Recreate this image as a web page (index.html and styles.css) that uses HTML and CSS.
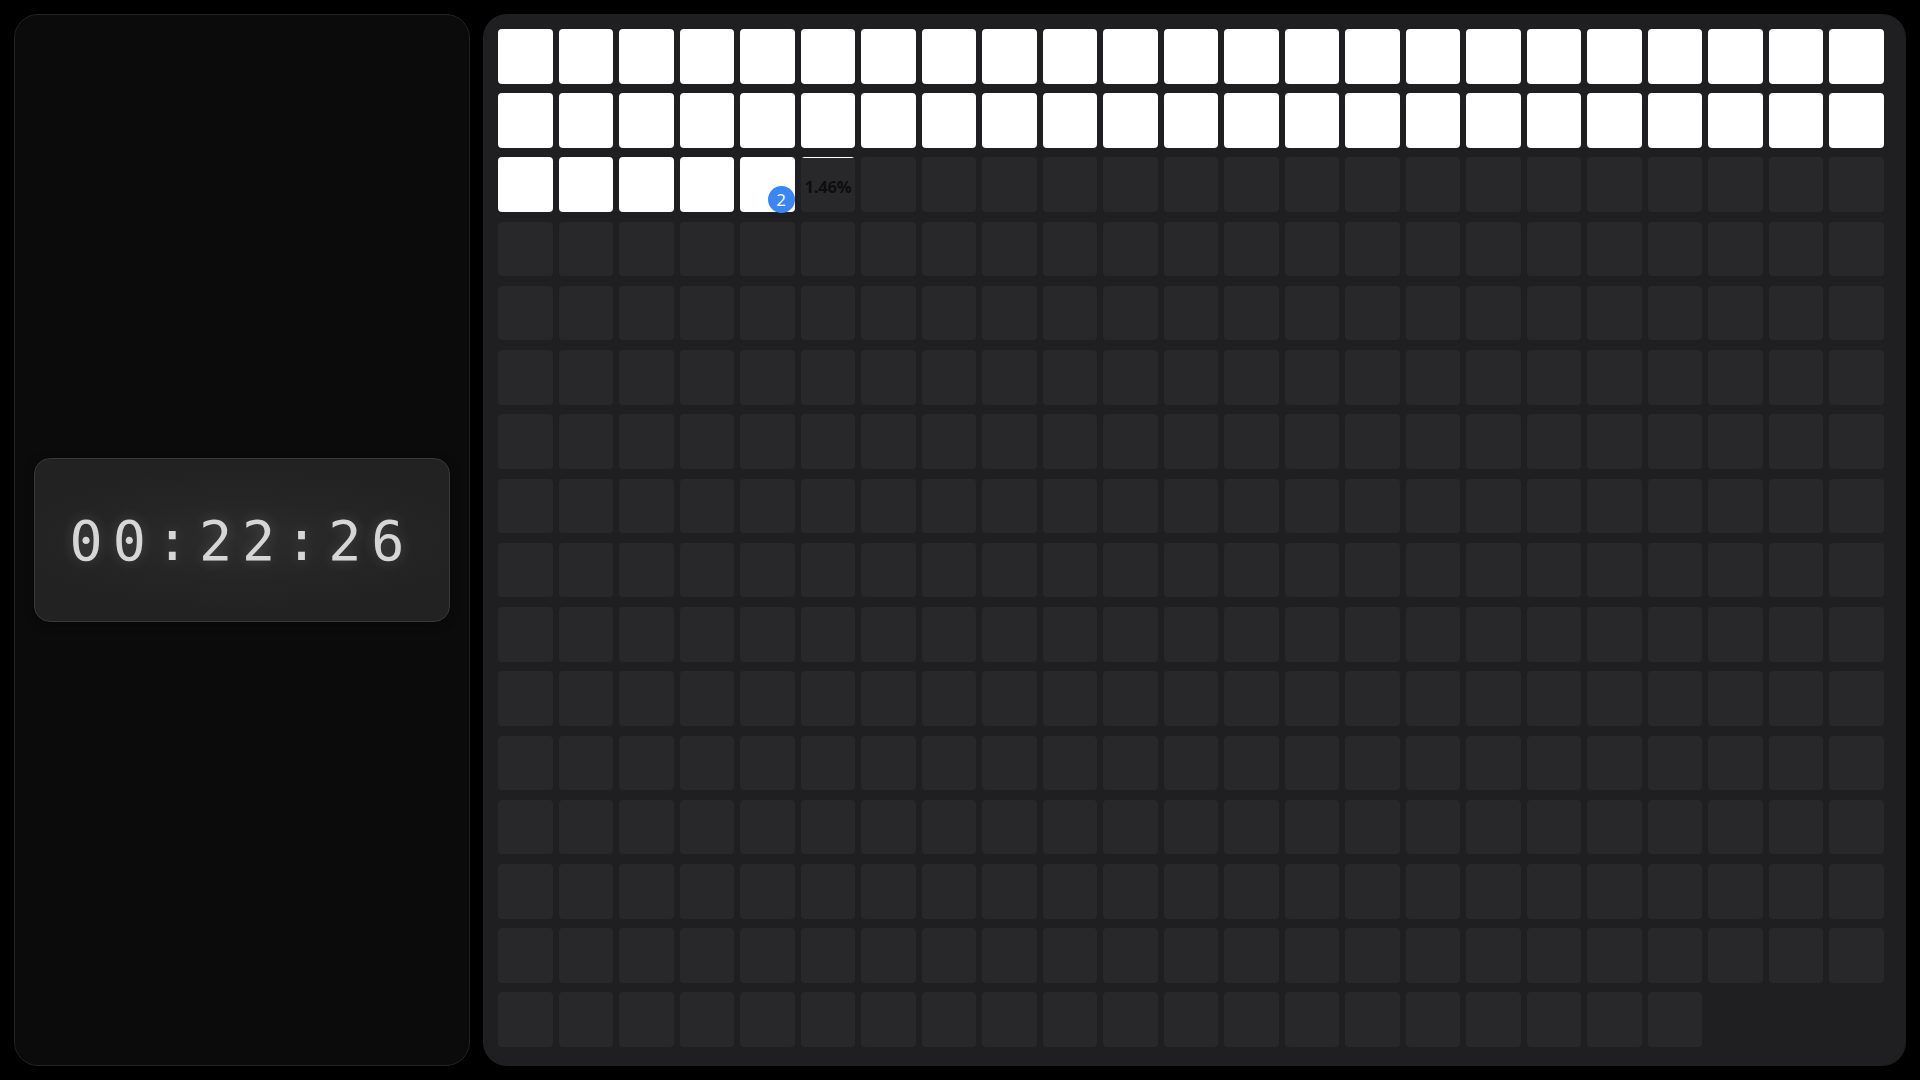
FILE: index.html
```html
<!DOCTYPE html>
<html lang="en">
<head>
<meta charset="utf-8">
<title>Year Progress</title>
<link rel="stylesheet" href="styles.css">
</head>
<body>
<main class="app">
  <aside class="side">
    <div class="clock"><span class="clock-text">00:22:26</span></div>
  </aside>
  <section class="board">
    <div class="grid">
      <div class="c f"></div><div class="c f"></div><div class="c f"></div><div class="c f"></div><div class="c f"></div><div class="c f"></div><div class="c f"></div><div class="c f"></div><div class="c f"></div><div class="c f"></div><div class="c f"></div><div class="c f"></div><div class="c f"></div><div class="c f"></div><div class="c f"></div><div class="c f"></div><div class="c f"></div><div class="c f"></div><div class="c f"></div><div class="c f"></div><div class="c f"></div><div class="c f"></div><div class="c f"></div>
      <div class="c f"></div><div class="c f"></div><div class="c f"></div><div class="c f"></div><div class="c f"></div><div class="c f"></div><div class="c f"></div><div class="c f"></div><div class="c f"></div><div class="c f"></div><div class="c f"></div><div class="c f"></div><div class="c f"></div><div class="c f"></div><div class="c f"></div><div class="c f"></div><div class="c f"></div><div class="c f"></div><div class="c f"></div><div class="c f"></div><div class="c f"></div><div class="c f"></div><div class="c f"></div>
      <div class="c f"></div><div class="c f"></div><div class="c f"></div><div class="c f"></div><div class="c f mark"><span class="badge">2</span></div><div class="c today"><span class="fill" style="height:1.46%"></span><span class="pct">1.46%</span></div><div class="c"></div><div class="c"></div><div class="c"></div><div class="c"></div><div class="c"></div><div class="c"></div><div class="c"></div><div class="c"></div><div class="c"></div><div class="c"></div><div class="c"></div><div class="c"></div><div class="c"></div><div class="c"></div><div class="c"></div><div class="c"></div><div class="c"></div>
      <div class="c"></div><div class="c"></div><div class="c"></div><div class="c"></div><div class="c"></div><div class="c"></div><div class="c"></div><div class="c"></div><div class="c"></div><div class="c"></div><div class="c"></div><div class="c"></div><div class="c"></div><div class="c"></div><div class="c"></div><div class="c"></div><div class="c"></div><div class="c"></div><div class="c"></div><div class="c"></div><div class="c"></div><div class="c"></div><div class="c"></div>
      <div class="c"></div><div class="c"></div><div class="c"></div><div class="c"></div><div class="c"></div><div class="c"></div><div class="c"></div><div class="c"></div><div class="c"></div><div class="c"></div><div class="c"></div><div class="c"></div><div class="c"></div><div class="c"></div><div class="c"></div><div class="c"></div><div class="c"></div><div class="c"></div><div class="c"></div><div class="c"></div><div class="c"></div><div class="c"></div><div class="c"></div>
      <div class="c"></div><div class="c"></div><div class="c"></div><div class="c"></div><div class="c"></div><div class="c"></div><div class="c"></div><div class="c"></div><div class="c"></div><div class="c"></div><div class="c"></div><div class="c"></div><div class="c"></div><div class="c"></div><div class="c"></div><div class="c"></div><div class="c"></div><div class="c"></div><div class="c"></div><div class="c"></div><div class="c"></div><div class="c"></div><div class="c"></div>
      <div class="c"></div><div class="c"></div><div class="c"></div><div class="c"></div><div class="c"></div><div class="c"></div><div class="c"></div><div class="c"></div><div class="c"></div><div class="c"></div><div class="c"></div><div class="c"></div><div class="c"></div><div class="c"></div><div class="c"></div><div class="c"></div><div class="c"></div><div class="c"></div><div class="c"></div><div class="c"></div><div class="c"></div><div class="c"></div><div class="c"></div>
      <div class="c"></div><div class="c"></div><div class="c"></div><div class="c"></div><div class="c"></div><div class="c"></div><div class="c"></div><div class="c"></div><div class="c"></div><div class="c"></div><div class="c"></div><div class="c"></div><div class="c"></div><div class="c"></div><div class="c"></div><div class="c"></div><div class="c"></div><div class="c"></div><div class="c"></div><div class="c"></div><div class="c"></div><div class="c"></div><div class="c"></div>
      <div class="c"></div><div class="c"></div><div class="c"></div><div class="c"></div><div class="c"></div><div class="c"></div><div class="c"></div><div class="c"></div><div class="c"></div><div class="c"></div><div class="c"></div><div class="c"></div><div class="c"></div><div class="c"></div><div class="c"></div><div class="c"></div><div class="c"></div><div class="c"></div><div class="c"></div><div class="c"></div><div class="c"></div><div class="c"></div><div class="c"></div>
      <div class="c"></div><div class="c"></div><div class="c"></div><div class="c"></div><div class="c"></div><div class="c"></div><div class="c"></div><div class="c"></div><div class="c"></div><div class="c"></div><div class="c"></div><div class="c"></div><div class="c"></div><div class="c"></div><div class="c"></div><div class="c"></div><div class="c"></div><div class="c"></div><div class="c"></div><div class="c"></div><div class="c"></div><div class="c"></div><div class="c"></div>
      <div class="c"></div><div class="c"></div><div class="c"></div><div class="c"></div><div class="c"></div><div class="c"></div><div class="c"></div><div class="c"></div><div class="c"></div><div class="c"></div><div class="c"></div><div class="c"></div><div class="c"></div><div class="c"></div><div class="c"></div><div class="c"></div><div class="c"></div><div class="c"></div><div class="c"></div><div class="c"></div><div class="c"></div><div class="c"></div><div class="c"></div>
      <div class="c"></div><div class="c"></div><div class="c"></div><div class="c"></div><div class="c"></div><div class="c"></div><div class="c"></div><div class="c"></div><div class="c"></div><div class="c"></div><div class="c"></div><div class="c"></div><div class="c"></div><div class="c"></div><div class="c"></div><div class="c"></div><div class="c"></div><div class="c"></div><div class="c"></div><div class="c"></div><div class="c"></div><div class="c"></div><div class="c"></div>
      <div class="c"></div><div class="c"></div><div class="c"></div><div class="c"></div><div class="c"></div><div class="c"></div><div class="c"></div><div class="c"></div><div class="c"></div><div class="c"></div><div class="c"></div><div class="c"></div><div class="c"></div><div class="c"></div><div class="c"></div><div class="c"></div><div class="c"></div><div class="c"></div><div class="c"></div><div class="c"></div><div class="c"></div><div class="c"></div><div class="c"></div>
      <div class="c"></div><div class="c"></div><div class="c"></div><div class="c"></div><div class="c"></div><div class="c"></div><div class="c"></div><div class="c"></div><div class="c"></div><div class="c"></div><div class="c"></div><div class="c"></div><div class="c"></div><div class="c"></div><div class="c"></div><div class="c"></div><div class="c"></div><div class="c"></div><div class="c"></div><div class="c"></div><div class="c"></div><div class="c"></div><div class="c"></div>
      <div class="c"></div><div class="c"></div><div class="c"></div><div class="c"></div><div class="c"></div><div class="c"></div><div class="c"></div><div class="c"></div><div class="c"></div><div class="c"></div><div class="c"></div><div class="c"></div><div class="c"></div><div class="c"></div><div class="c"></div><div class="c"></div><div class="c"></div><div class="c"></div><div class="c"></div><div class="c"></div><div class="c"></div><div class="c"></div><div class="c"></div>
      <div class="c"></div><div class="c"></div><div class="c"></div><div class="c"></div><div class="c"></div><div class="c"></div><div class="c"></div><div class="c"></div><div class="c"></div><div class="c"></div><div class="c"></div><div class="c"></div><div class="c"></div><div class="c"></div><div class="c"></div><div class="c"></div><div class="c"></div><div class="c"></div><div class="c"></div><div class="c"></div>
    </div>
  </section>
</main>
</body>
</html>
```

FILE: styles.css
```css
* { box-sizing: border-box; }
html, body { margin: 0; height: 100%; background: #000; }
body { font-family: "Open Sans", "Noto Sans", sans-serif; overflow: hidden; }

.app {
  display: flex;
  gap: 13px;
  height: 100%;
  padding: 14px;
}

.side {
  width: 456px;
  flex: none;
  background: #0b0b0b;
  border: 1px solid #222;
  border-radius: 24px;
  display: flex;
  align-items: center;
  padding: 0 19px;
}

.clock {
  width: 100%;
  height: 164px;
  border: 1px solid #393939;
  border-radius: 16px;
  background: radial-gradient(ellipse 60% 45% at 50% 50%, #2c2c2c 0%, #252525 55%, #222 100%);
  display: flex;
  align-items: center;
  justify-content: center;
  box-shadow: 0 2px 10px rgba(0,0,0,0.4);
}

.clock-text {
  font-family: "DejaVu Sans Mono", monospace;
  font-size: 55px;
  letter-spacing: 10px;
  color: #d6d6d6;
  text-shadow: 0 0 14px rgba(255,255,255,0.18);
  line-height: 1;
  margin-top: 3px;
}

.board {
  flex: 1;
  background: #1f1f21;
  border-radius: 24px;
  padding: 15px 22px 19px 15px;
  box-shadow: inset 1px 0 0 rgba(255,255,255,0.02);
}

.grid {
  height: 100%;
  display: grid;
  grid-template-columns: repeat(23, 1fr);
  grid-template-rows: repeat(16, 1fr);
  column-gap: 6px;
  row-gap: 9.7px;
}

.c {
  background: #28282a;
  border-radius: 4px;
  position: relative;
}

.c.f { background: #fff; }

.badge {
  position: absolute;
  right: 0;
  bottom: -1px;
  width: 27px;
  height: 27px;
  border-radius: 50%;
  background: #3b86f5;
  color: #fff;
  font-size: 17px;
  line-height: 27px;
  text-align: center;
}

.today {
  overflow: hidden;
  display: flex;
  align-items: center;
  justify-content: center;
}

.fill {
  position: absolute;
  top: 0;
  left: 0;
  right: 0;
  background: #fff;
  min-height: 1px;
}

.pct {
  color: #0d0d0d;
  font-weight: 700;
  font-size: 16.5px;
  letter-spacing: -0.2px;
  margin-top: 3px;
}
```
